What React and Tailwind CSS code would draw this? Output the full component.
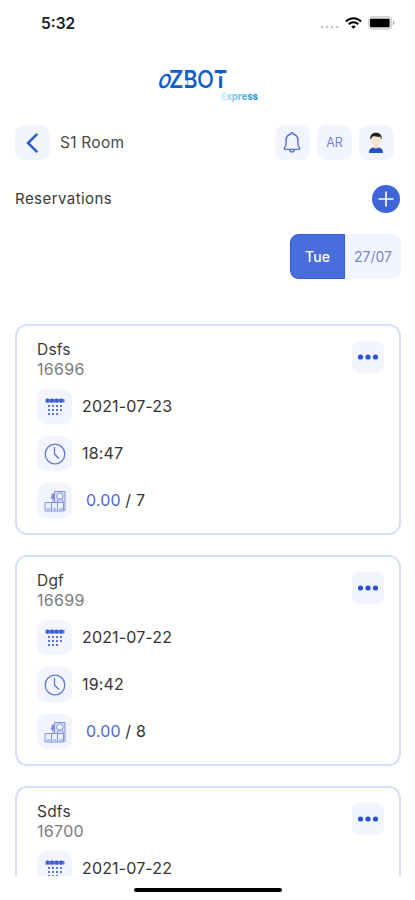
import React from 'react';

const reservations = [
    { name: 'Dsfs', number: '16696', date: '2021-07-23', time: '18:47', paid: '0.00', guests: 7 },
    { name: 'Dgf', number: '16699', date: '2021-07-22', time: '19:42', paid: '0.00', guests: 8 },
    { name: 'Sdfs', number: '16700', date: '2021-07-22' },
];

const StatusBar = () => (
    <div className="flex h-[46px] shrink-0 items-center justify-between pl-[41px] pr-[20px]">
        <span className="mt-[1px] text-[15.5px] font-semibold text-[#1c1c1c]">5:32</span>
        <div className="flex items-center">
            <svg width="20" height="12" viewBox="0 0 20 12" fill="#c4c4c4">
                <circle cx="2" cy="10" r="1.3" />
                <circle cx="7" cy="10" r="1.3" />
                <circle cx="12" cy="10" r="1.3" />
                <circle cx="17" cy="10" r="1.3" />
            </svg>
            <svg className="ml-[5px]" width="17" height="12" viewBox="0 0 17 12" fill="none" stroke="#000" strokeWidth="2.1">
                <path d="M1 4.4C5.2.1 11.8.1 16 4.4" />
                <path d="M3.8 7.3c2.7-2.7 6.7-2.7 9.4 0" />
                <path d="M8.5 11.8 6.2 9.5c1.3-1.2 3.3-1.2 4.6 0z" fill="#000" stroke="none" />
            </svg>
            <svg className="ml-[6px]" width="27" height="14" viewBox="0 0 27 14">
                <rect x=".7" y=".7" width="23" height="12.4" rx="3.8" fill="#e4e4e4" stroke="#d0d0d0" strokeWidth="1.3" />
                <rect x="2" y="2.8" width="19.6" height="8.4" rx="1.2" fill="#000" />
                <path d="M25 4.6c2 .8 2 3.8 0 4.6z" fill="#b5b5b5" />
            </svg>
        </div>
    </div>
);

const Logo = () => (
    <svg width="106" height="36" viewBox="0 0 106 36" fontFamily="Inter, sans-serif">
        <defs>
            <linearGradient id="express" x1="0" x2="1">
                <stop offset="0" stopColor="#d3eefa" />
                <stop offset="0.5" stopColor="#6cc3ea" />
                <stop offset="1" stopColor="#1796dc" />
            </linearGradient>
        </defs>
        <g fill="#0b5ed0">
            <text transform="translate(1.5 21) skewX(-16)" fontSize="26" fontWeight="500" textLength="13" lengthAdjust="spacingAndGlyphs">o</text>
            <text x="14" y="21" fontSize="24.5" fontWeight="600" textLength="14.5" lengthAdjust="spacingAndGlyphs">Z</text>
            <text x="28.5" y="21" fontSize="24.5" fontWeight="600" textLength="14" lengthAdjust="spacingAndGlyphs">B</text>
            <text x="42" y="21" fontSize="24.5" fontWeight="500" textLength="17" lengthAdjust="spacingAndGlyphs">O</text>
            <text x="59" y="21" fontSize="24.5" fontWeight="700" textLength="13" lengthAdjust="spacingAndGlyphs">T</text>
        </g>
        {/* the stem of the T hangs free of its bar, the B is open at its left side */}
        <rect x="59" y="6.8" width="13" height="2.4" fill="#fff" />
        <rect x="28.5" y="13.5" width="4" height="4.2" fill="#fff" />
        <text x="65.5" y="32.5" fontSize="9.5" fontWeight="800" fill="url(#express)" textLength="37.5" lengthAdjust="spacingAndGlyphs">Express</text>
    </svg>
);

const Tile = ({ children }) => (
    <div className="flex h-[35px] w-[35px] shrink-0 items-center justify-center rounded-[9px] bg-[#f2f5ff]">
        {children}
    </div>
);

const BackIcon = () => (
    <svg width="20" height="22" viewBox="0 0 20 22" fill="none" stroke="#3059d6" strokeWidth="2.5">
        <path d="M14.3 1.8 5 11l9.3 9.2" />
    </svg>
);

const BellIcon = () => (
    <svg className="mr-[2px]" width="20" height="22" viewBox="0 0 20 22" fill="none" stroke="#5873d2" strokeWidth="1.4" strokeLinejoin="round">
        <path d="M8.6 2.2a1.4 1.4 0 0 1 2.8 0c3.2.6 4.6 3 4.6 6.2v4.2c0 1.6.6 2.2 1.4 3 .8.9.4 1.8-.6 1.8H3.2c-1 0-1.4-.9-.6-1.8.8-.8 1.4-1.4 1.4-3V8.400c0-3.200 1.400-5.600 4.600-6.200z" />
        <path d="M7.600 17.600c.4 3.200 4.400 3.200 4.800 0" />
    </svg>
);

const UserIcon = () => (
    <svg className="mr-[2px]" width="16" height="22" viewBox="0 0 16 22">
        <path d="M5.600 12h4.800v5H5.600z" fill="#f3d9bd" />
        <path d="M1 21c0-3.800 1.700-5 4.600-5.400 1 1.500 3.800 1.500 4.800 0C13.300 16 15 17.200 15 21z" fill="#2452c6" />
        <rect x="3.300" y="2.500" width="9.400" height="11.500" rx="4.500" fill="#fae5cf" />
        <path d="M2.500 7.800C1.600 3.400 4.200.8 8 .8s6.400 2.600 5.500 7l-1.300-3C9.600 5.300 6.700 4 5.400 4.300 4.200 4.500 3.600 6.300 2.500 7.800z" fill="#20232b" />
    </svg>
);

const CalendarIcon = () => (
    <svg width="22" height="20" viewBox="0 0 22 20" fill="#5b76d8">
        <rect x="1.5" y="2" width="19" height="3.5" fill="#5575dc" />
        <path d="M2.500 1.500h2v4h-2zM7 1.500h2v4H7zM11.500 1.500h2v4h-2zM16 1.500h2v4h-2z" fill="#3358cf" />
        {[8, 12, 16].map((y) =>
            [4, 8, 12, 16].map((x) =>
                y === 16 && x === 16 ? null : <rect key={`${x}-${y}`} x={x} y={y} width="2" height="2" />
            )
        )}
    </svg>
);

const ClockIcon = () => (
    <svg width="22" height="22" viewBox="0 0 22 22" fill="none" stroke="#5c78d3" strokeWidth="1.3" strokeLinecap="round">
        <circle cx="11" cy="11" r="9.8" />
        <path d="M10.500 4.500V11l4 4.200" />
    </svg>
);

const CashierIcon = () => (
    <svg width="22" height="22" viewBox="0 0 22 22" fill="none" stroke="#8194dc" strokeWidth="1">
        <path d="M10.500 12V1.500H21v19.500" fill="#d5ddfa" />
        <path d="M13.500 12c0-2 .8-2.500 2.800-2.500 2 0 3 .8 3 2.500" />
        <circle cx="15.8" cy="6" r="3.2" fill="#f2f5ff" />
        <path d="M1 12.500h18.500v8.500H1zM7.500 12.500V21M13.500 12.500V21" fill="#eaefff" />
        <path d="M9 12V8.500M9 9 6.500 7.500" />
        <path d="M8 4h2.500v5H8z" fill="#6f87de" />
        <path d="M2.500 19h4M9 19h3M15 19h4" />
    </svg>
);

const DetailRow = ({ icon, children }) => (
    <div className="flex items-center gap-[10px]">
        <Tile>{icon}</Tile>
        <span className="-mt-[2px] text-[16px] leading-5 tracking-[0.15px] text-[#333]">{children}</span>
    </div>
);

const ReservationCard = ({ item }) => (
    <article className="flex h-[211px] shrink-0 justify-between rounded-xl border-2 border-[#d8dff9] pl-5 pr-[15px] pt-[14px]">
        <div>
            <h2 className="text-[15.5px] leading-5 tracking-[0.2px] text-[#3a3a3a]">{item.name}</h2>
            <p className="text-[16px] leading-[18px] tracking-[0.3px] text-[#7a7a7a]">{item.number}</p>
            <div className="mt-[11px] flex flex-col gap-3">
                <DetailRow icon={<CalendarIcon />}>{item.date}</DetailRow>
                {item.time && <DetailRow icon={<ClockIcon />}>{item.time}</DetailRow>}
                {item.paid && (
                    <DetailRow icon={<CashierIcon />}>
                        <span className="ml-1 text-[#4b69d5]">{item.paid}</span> / {item.guests}
                    </DetailRow>
                )}
            </div>
        </div>
        <button type="button" aria-label="More" className="mt-[1px] flex h-8 w-8 items-center justify-center rounded-lg bg-[#f2f5ff]">
            <svg width="22" height="6" viewBox="0 0 22 6" fill="#2853cc">
                <circle cx="3.5" cy="3" r="2.6" />
                <circle cx="11" cy="3" r="2.6" />
                <circle cx="18.5" cy="3" r="2.6" />
            </svg>
        </button>
    </article>
);

const App = () => (
    <div className="flex h-[900px] w-[415px] flex-col overflow-hidden bg-white font-['Inter',sans-serif]">
        <StatusBar />
        <div className="flex shrink-0 justify-center pt-[21px]">
            <Logo />
        </div>

        <header className="mt-[22px] flex shrink-0 items-center pl-[15px] pr-[21px]">
            <Tile><BackIcon /></Tile>
            <h1 className="ml-[10px] text-[15.5px] leading-5 tracking-[0.25px] text-[#4a4a4a]">S1 Room</h1>
            <div className="ml-auto flex gap-[7px]">
                <Tile><BellIcon /></Tile>
                <Tile><span className="mt-[1px] text-[12.5px] text-[#7187d8]">AR</span></Tile>
                <Tile><UserIcon /></Tile>
            </div>
        </header>

        <div className="mt-[25px] flex h-7 shrink-0 items-center justify-between pl-[15px] pr-[15px]">
            <span className="mt-[1px] text-[15px] tracking-[0.45px] text-[#3a3a3a]">Reservations</span>
            <button type="button" aria-label="Add reservation" className="flex h-7 w-7 items-center justify-center rounded-full bg-[#3f65d9]">
                <svg width="16" height="16" viewBox="0 0 16 16" stroke="#fff" strokeWidth="1.6">
                    <path d="M8 .5v15M.5 8h15" />
                </svg>
            </button>
        </div>

        <div className="ml-auto mr-[14px] mt-[21px] flex h-[45px] w-[111px] shrink-0 overflow-hidden rounded-lg text-[14px]">
            <div className="flex w-[55px] items-center justify-center rounded-l-lg border border-[#3559ce] bg-[#4a6ddd] pb-px font-medium text-white">Tue</div>
            <div className="flex flex-1 items-center justify-center rounded-r-lg bg-[#f2f5ff] pb-px text-[#7587d0]">27/07</div>
        </div>

        <main className="mt-[45px] flex h-[552px] shrink-0 flex-col gap-5 overflow-hidden pl-[15px] pr-[14px]">
            {reservations.map((item) => (
                <ReservationCard key={item.number} item={item} />
            ))}
        </main>

        <div className="mx-auto mt-3 h-1 w-[148px] shrink-0 rounded-full bg-black" />
    </div>
);

export default App;
